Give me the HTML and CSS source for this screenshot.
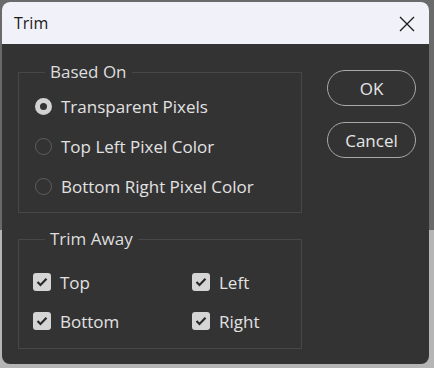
FILE: index.html
```html
<!DOCTYPE html>
<html lang="en">
<head>
  <meta charset="UTF-8">
  <title>Trim</title>
  <link rel="stylesheet" href="styles.css">
</head>
<body>
  <div class="dialog">
    <div class="title-bar">
      <span class="title">Trim</span>
      <svg class="close" width="16" height="16" viewBox="0 0 16 16">
        <path d="M1 1 L15 15 M15 1 L1 15" stroke="#1a1a1a" stroke-width="1.3" fill="none"/>
      </svg>
    </div>
    <div class="dialog-body">
      <div class="groups">
        <fieldset class="group based-on">
          <legend>Based On</legend>
          <div class="option">
            <span class="radio checked"></span>
            <span class="label">Transparent Pixels</span>
          </div>
          <div class="option">
            <span class="radio"></span>
            <span class="label">Top Left Pixel Color</span>
          </div>
          <div class="option">
            <span class="radio"></span>
            <span class="label">Bottom Right Pixel Color</span>
          </div>
        </fieldset>
        <fieldset class="group trim-away">
          <legend>Trim Away</legend>
          <div class="checks">
            <div class="option">
              <span class="checkbox"><svg width="12" height="10" viewBox="0 0 12 10"><path d="M1.5 5 L4.5 8 L10.5 1.8" stroke="#2a2a2a" stroke-width="2.2" fill="none"/></svg></span>
              <span class="label">Top</span>
            </div>
            <div class="option">
              <span class="checkbox"><svg width="12" height="10" viewBox="0 0 12 10"><path d="M1.5 5 L4.5 8 L10.5 1.8" stroke="#2a2a2a" stroke-width="2.2" fill="none"/></svg></span>
              <span class="label">Left</span>
            </div>
            <div class="option">
              <span class="checkbox"><svg width="12" height="10" viewBox="0 0 12 10"><path d="M1.5 5 L4.5 8 L10.5 1.8" stroke="#2a2a2a" stroke-width="2.2" fill="none"/></svg></span>
              <span class="label">Bottom</span>
            </div>
            <div class="option">
              <span class="checkbox"><svg width="12" height="10" viewBox="0 0 12 10"><path d="M1.5 5 L4.5 8 L10.5 1.8" stroke="#2a2a2a" stroke-width="2.2" fill="none"/></svg></span>
              <span class="label">Right</span>
            </div>
          </div>
        </fieldset>
      </div>
      <div class="buttons">
        <button class="btn">OK</button>
        <button class="btn">Cancel</button>
      </div>
    </div>
  </div>
</body>
</html>
```

FILE: styles.css
```css
body {
  margin: 0;
  width: 434px;
  height: 368px;
  font-family: "Open Sans", "Noto Sans", sans-serif;
  background-color: #6a6a6a;
  background-image: linear-gradient(to bottom, #6a6a6a 0, #6a6a6a 230px, #b5b5b5 230px);
  overflow: hidden;
}
.dialog {
  margin: 2px 0 0 2px;
  width: 427px;
  height: 362px;
  border-radius: 8px;
  overflow: hidden;
  background-color: #333333;
}
.title-bar {
  height: 42px;
  background-color: #f1f1f9;
  display: flex;
  align-items: center;
  justify-content: space-between;
  padding: 0 14px 0 12px;
}
.title {
  font-size: 16px;
  color: #1a1a1a;
}
.close {
  display: block;
  margin-top: 1px;
}
.dialog-body {
  display: flex;
  padding: 18px 13px 0 16px;
}
.groups {
  display: flex;
  flex-direction: column;
  gap: 16px;
}
.group {
  margin: 0;
  width: 284px;
  border: 1px solid #474747;
  padding: 0 0 0 16px;
  box-sizing: border-box;
}
.group legend {
  margin-left: 10px;
  padding: 0 5px;
  font-size: 17px;
  line-height: 20px;
  color: #dedede;
}
.based-on {
  height: 151px;
  padding-top: 4px;
}
.trim-away {
  height: 120px;
  padding-top: 13px;
}
.option {
  display: flex;
  align-items: center;
  height: 40px;
}
.label {
  font-size: 17px;
  color: #e2e2e2;
  margin-left: 9px;
}
.radio {
  width: 17px;
  height: 17px;
  border-radius: 50%;
  border: 1px solid #5e5e5e;
  box-sizing: border-box;
}
.radio.checked {
  border: 5.5px solid #d2d2d2;
  background-color: #333333;
}
.checks {
  display: grid;
  grid-template-columns: 159px 1fr;
  grid-auto-rows: 39px;
  margin-left: -2px;
}
.checkbox {
  width: 18px;
  height: 18px;
  border-radius: 3px;
  background-color: #d5d5d5;
  display: flex;
  align-items: center;
  justify-content: center;
}
.buttons {
  display: flex;
  flex-direction: column;
  gap: 16px;
  margin-left: 25px;
  padding-top: 8px;
}
.btn {
  width: 89px;
  height: 36px;
  border-radius: 18px;
  border: 1px solid #a8a8a8;
  background-color: #333333;
  color: #e6e6e6;
  font-family: "Open Sans", "Noto Sans", sans-serif;
  font-size: 17px;
  padding: 0;
}
```
